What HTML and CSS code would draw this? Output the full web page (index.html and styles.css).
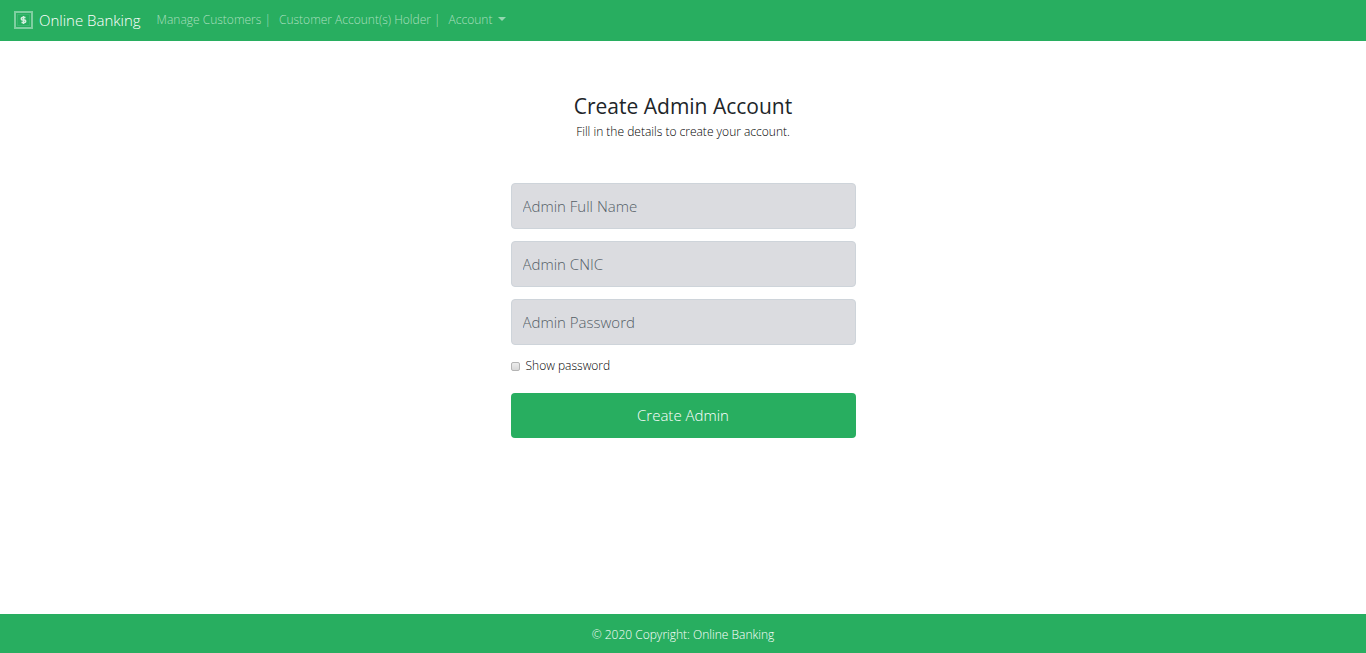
FILE: index.html
```html
<!DOCTYPE html>
<html lang="en">
<head>
  <meta charset="utf-8">
  <meta name="viewport" content="width=device-width, initial-scale=1">
  <title>Create Admin Account - Online Banking</title>
  <link rel="stylesheet" href="styles.css">
</head>
<body>
  <header class="navbar">
    <a class="brand" href="#">
      <svg class="brand-icon" viewBox="0 0 19 18" aria-hidden="true">
        <rect x="1" y="1" width="17" height="16" fill="none" stroke="#7fcfa1" stroke-width="2"/>
        <rect x="3.5" y="3.5" width="12" height="11" fill="none" stroke="#4fbd7e" stroke-dasharray="1 1"/>
        <path d="M11.500 6.500h-3a1 1 0 0 0 0 2.500h2a1 1 0 0 1 0 2.500h-3M9.500 5v8" fill="none" stroke="#d4efdf" stroke-width="1.500"/>
      </svg>
      <span>Online Banking</span>
    </a>
    <nav class="nav" aria-label="Main">
      <a class="nav-link" href="#">Manage Customers |</a>
      <a class="nav-link" href="#">Customer Account(s) Holder |</a>
      <a class="nav-link dropdown" href="#">Account</a>
    </nav>
  </header>
  <main class="content">
    <form class="form">
      <h1 class="title">Create Admin Account</h1>
      <p class="subtitle">Fill in the details to create your account.</p>
      <input class="field" type="text" placeholder="Admin Full Name" aria-label="Admin Full Name">
      <input class="field" type="text" placeholder="Admin CNIC" aria-label="Admin CNIC">
      <input class="field" type="password" placeholder="Admin Password" aria-label="Admin Password">
      <div class="check">
        <input class="check-box" type="checkbox" id="show-password">
        <label for="show-password">Show password</label>
      </div>
      <button class="submit" type="submit">Create Admin</button>
    </form>
  </main>
  <footer class="footer">© 2020 Copyright: <a class="footer-link" href="#">Online Banking</a></footer>
</body>
</html>
```
FILE: styles.css
```css
* {
  box-sizing: border-box;
}

body {
  margin: 0;
  min-height: 100vh;
  display: flex;
  flex-direction: column;
  font-family: "Open Sans", "Noto Sans", sans-serif;
  font-size: 12px;
  font-weight: 300;
  line-height: 18px;
  color: #212529;
  background: #fff;
}

a {
  color: inherit;
  text-decoration: none;
}

.navbar {
  display: flex;
  align-items: center;
  gap: 16px;
  min-height: 41px;
  padding: 0 14px 1px;
  background: #28ae60;
}

.brand {
  display: flex;
  align-items: center;
  gap: 6px;
  font-size: 15px;
  line-height: 24px;
  color: #fff;
}

.brand-icon {
  width: 19px;
  height: 18px;
}

.nav {
  display: flex;
  gap: 8px;
}

.nav-link {
  color: #a9dfbf;
}

.dropdown::after {
  content: "";
  display: inline-block;
  margin-left: 6px;
  vertical-align: 3px;
  border-top: 4px solid #94d7b0;
  border-left: 4px solid transparent;
  border-right: 4px solid transparent;
}

.content {
  flex: 1;
  padding: 53px 16px 24px;
}

.form {
  display: flex;
  flex-direction: column;
  max-width: 345px;
  margin: 0 auto;
}

.title {
  margin: 0 0 5px;
  font-size: 21px;
  font-weight: 500;
  line-height: 24px;
  text-align: center;
}

.subtitle {
  margin: 0 0 42px;
  color: #000;
  text-align: center;
}

.field {
  width: 100%;
  height: 46px;
  margin: 0 0 12px;
  padding: 0 11px;
  border: 1px solid #ced4da;
  border-radius: 4px;
  background: #dbdce0;
  color: #495057;
  font: inherit;
  font-size: 15px;
}

.field::placeholder {
  color: #545e67;
  opacity: 1;
}

.check {
  display: flex;
  align-items: center;
  gap: 6px;
  margin-bottom: 18px;
  color: #000;
}

.check-box {
  appearance: none;
  width: 9px;
  height: 9px;
  margin: 0;
  border: 1px solid #b4b4b4;
  border-radius: 2px;
  background: linear-gradient(#ececec, #d8d8d8);
}

.check-box:checked {
  background: #28ae60;
}

.submit {
  height: 45px;
  padding: 0 12px 1px;
  border: 0;
  border-radius: 4px;
  background: #28ae60;
  color: #fff;
  font: inherit;
  font-size: 15px;
}

.footer {
  padding: 12px 16px 9px;
  background: #28ae60;
  color: #fff;
  text-align: center;
}
```
